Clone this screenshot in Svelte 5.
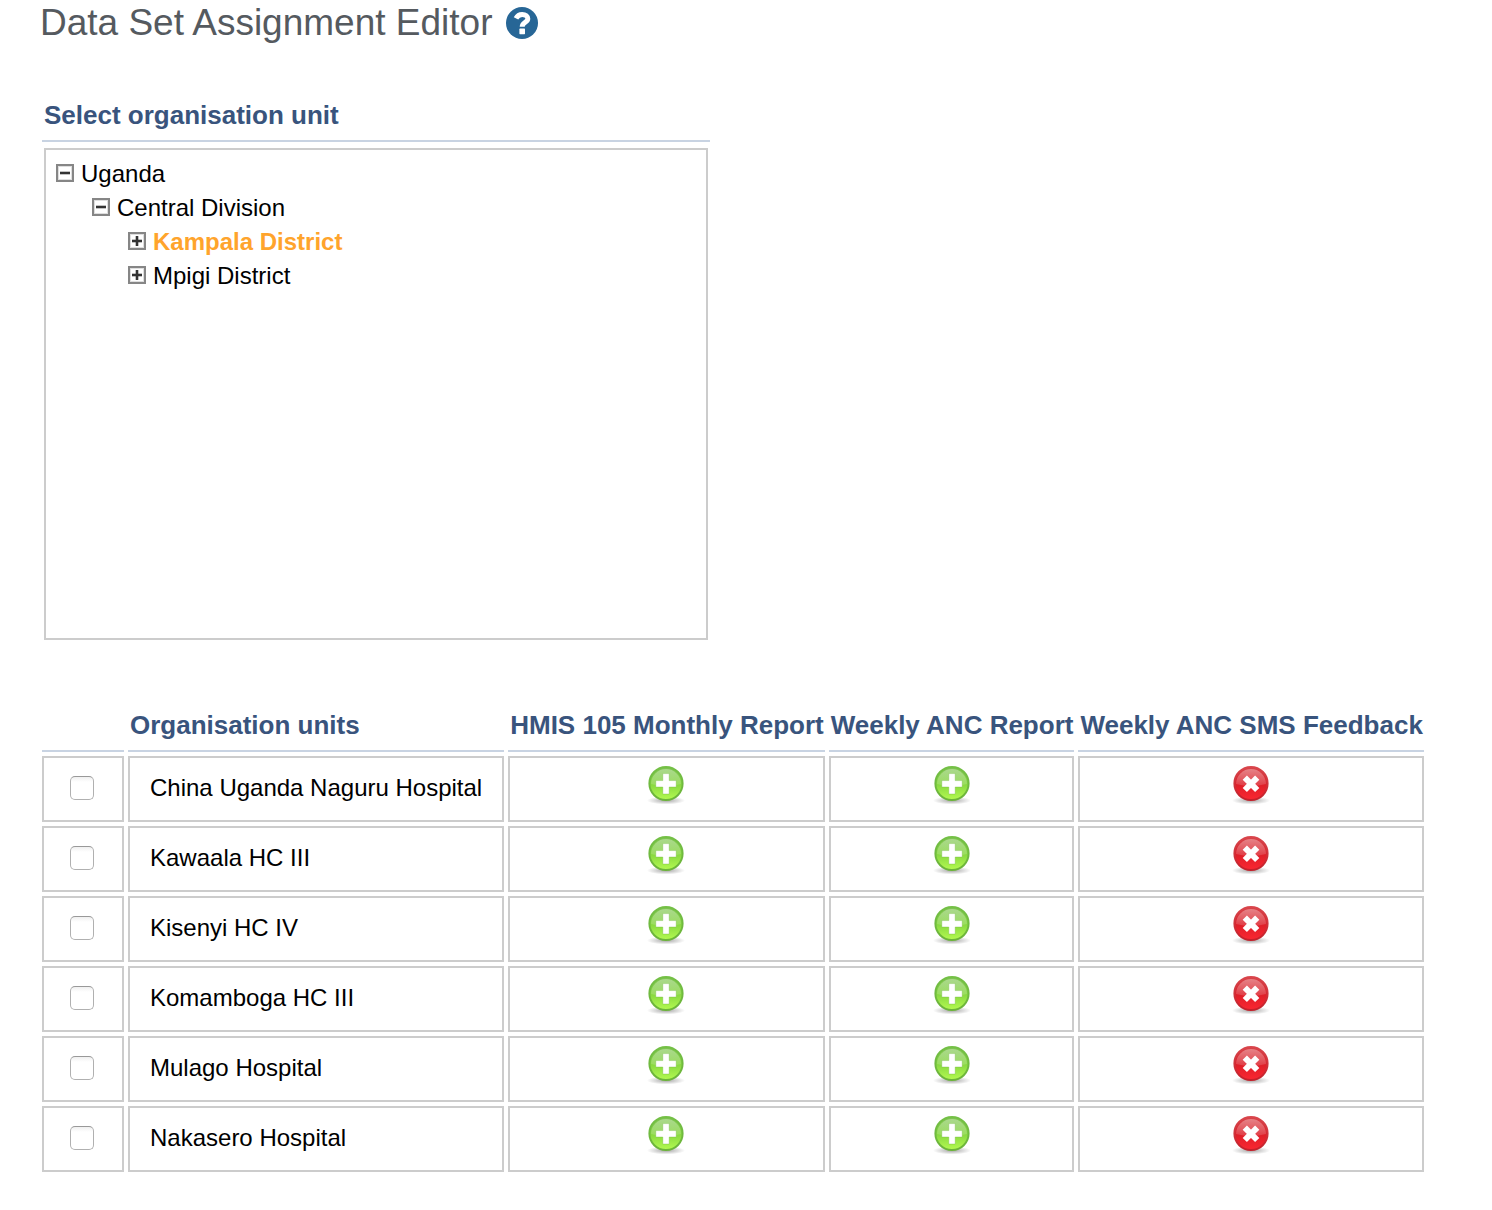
<script lang="ts">
  interface TreeNode {
    name: string;
    open?: boolean;
    children?: TreeNode[];
  }

  interface OrgUnit {
    name: string;
    assigned: boolean[];
  }

  const dataSets = ['HMIS 105 Monthly Report', 'Weekly ANC Report', 'Weekly ANC SMS Feedback'];

  let tree: TreeNode[] = $state([
    {
      name: 'Uganda',
      open: true,
      children: [
        {
          name: 'Central Division',
          open: true,
          children: [{ name: 'Kampala District' }, { name: 'Mpigi District' }]
        }
      ]
    }
  ]);

  let units: OrgUnit[] = $state(
    [
      'China Uganda Naguru Hospital',
      'Kawaala HC III',
      'Kisenyi HC IV',
      'Komamboga HC III',
      'Mulago Hospital',
      'Nakasero Hospital'
    ].map(name => ({ name, assigned: [true, true, false] }))
  );

  let selected = $state('Kampala District');
</script>

{#snippet branch(nodes: TreeNode[])}
  <ul>
    {#each nodes as node (node.name)}
      <li>
        <div class="node">
          <button
            class="toggle"
            aria-label={(node.open ? 'Collapse ' : 'Expand ') + node.name}
            onclick={() => (node.open = !node.open)}
          >
            <svg width="18" height="18" viewBox="0 0 18 18">
              <rect x="1" y="1" width="16" height="16" fill="#fff" stroke="#868686" stroke-width="2" />
              <rect x="2.5" y="2.5" width="13" height="13" fill="none" stroke="#dedede" />
              <path d="M4 9H14" stroke="#333" stroke-width="2.6" />
              {#if !node.open}
                <path d="M9 4V14" stroke="#333" stroke-width="2.6" />
              {/if}
            </svg>
          </button>
          <a
            href="#{node.name.toLowerCase().replace(' ', '-')}"
            class:selected={selected === node.name}
            onclick={() => (selected = node.name)}>{node.name}</a>
        </div>
        {#if node.open && node.children}
          {@render branch(node.children)}
        {/if}
      </li>
    {/each}
  </ul>
{/snippet}

<svg class="defs" width="0" height="0" aria-hidden="true">
  <defs>
    <linearGradient id="green" x1="0" y1="0" x2="0" y2="1">
      <stop offset="0" stop-color="#7cc152" />
      <stop offset="0.5" stop-color="#86d640" />
      <stop offset="1" stop-color="#b4fb50" />
    </linearGradient>
    <linearGradient id="green-rim" x1="0" y1="0" x2="0" y2="1">
      <stop offset="0" stop-color="#74c046" />
      <stop offset="1" stop-color="#6cb43a" />
    </linearGradient>
    <linearGradient id="red" x1="0" y1="0" x2="0" y2="1">
      <stop offset="0" stop-color="#d8444a" />
      <stop offset="0.5" stop-color="#dc1e28" />
      <stop offset="1" stop-color="#fb2631" />
    </linearGradient>
    <linearGradient id="red-rim" x1="0" y1="0" x2="0" y2="1">
      <stop offset="0" stop-color="#d9464c" />
      <stop offset="1" stop-color="#c4202a" />
    </linearGradient>
    <linearGradient id="gloss" x1="0" y1="0" x2="0" y2="1">
      <stop offset="0" stop-color="#fff" stop-opacity="0.35" />
      <stop offset="1" stop-color="#fff" stop-opacity="0.15" />
    </linearGradient>
    <radialGradient id="shadow">
      <stop offset="0" stop-color="#000" stop-opacity="0.35" />
      <stop offset="1" stop-color="#000" stop-opacity="0" />
    </radialGradient>
  </defs>
</svg>

<main>
  <h1>
    Data Set Assignment Editor
    <a class="help" href="#help" aria-label="Help">
      <svg width="32" height="32" viewBox="0 0 32 32">
        <circle cx="16" cy="16" r="16" fill="#276696" />
        <path
          d="M10 11.4C11.4 8.6 13.3 7.4 16.2 7.4C19.6 7.4 21.8 9.3 21.8 11.8C21.8 15.4 16.2 15.2 16.2 19.8"
          fill="none"
          stroke="#fff"
          stroke-width="5"
        />
        <rect x="13.4" y="21.6" width="5.6" height="5.6" rx="0.6" fill="#fff" />
      </svg>
    </a>
  </h1>

  <section class="picker">
    <h2>Select organisation unit</h2>
    <div class="tree">
      {@render branch(tree)}
    </div>
  </section>

  <table>
    <thead>
      <tr>
        <th aria-label="Select"></th>
        <th>Organisation units</th>
        {#each dataSets as dataSet}
          <th>{dataSet}</th>
        {/each}
      </tr>
    </thead>
    <tbody>
      {#each units as unit (unit.name)}
        <tr>
          <td><input type="checkbox" aria-label={unit.name} /></td>
          <td>{unit.name}</td>
          {#each unit.assigned as on, i}
            <td class="status">
              <button
                aria-label={(on ? 'Unassign ' : 'Assign ') + dataSets[i]}
                onclick={() => (unit.assigned[i] = !on)}
              >
                <svg width="40" height="48" viewBox="0 0 40 48">
                  <ellipse cx="20" cy="36.5" rx="19" ry="4" fill="url(#shadow)" />
                  {#if on}
                    <circle cx="20" cy="19.5" r="16.6" fill="url(#green)" stroke="url(#green-rim)" stroke-width="2" />
                    <path d="M5 20A15 15 0 0 1 35 20Q20 24 5 20Z" fill="url(#gloss)" />
                    <path
                      d="M16.8 9.6H23.2V16.6H30.2V23H23.2V30H16.8V23H9.8V16.6H16.8Z"
                      fill="#fff"
                      stroke="#6db53a"
                      stroke-opacity="0.35"
                    />
                  {:else}
                    <circle cx="20" cy="19.5" r="16.6" fill="url(#red)" stroke="url(#red-rim)" stroke-width="2" />
                    <path d="M5 20A15 15 0 0 1 35 20Q20 24 5 20Z" fill="url(#gloss)" />
                    <path d="M13.8 13.6L26.2 26M26.2 13.6L13.8 26" stroke="#fff" stroke-width="6" />
                  {/if}
                </svg>
              </button>
            </td>
          {/each}
        </tr>
      {/each}
    </tbody>
  </table>
</main>

<style>
  :global(body) {
    background: #fff;
  }

  .defs {
    position: absolute;
  }

  main {
    padding: 0 38px 34px;
    font-family: 'Liberation Sans', Arial, sans-serif;
    font-size: 24px;
    color: #000;
  }

  h1 {
    display: flex;
    align-items: center;
    gap: 14px;
    margin: 0 0 52px;
    padding-left: 2px;
    font-size: 37px;
    line-height: 46px;
    font-weight: 400;
    color: #555a5f;
  }

  .help,
  .help svg {
    display: block;
  }

  .picker {
    width: 668px;
    max-width: 100%;
    margin: 0 4px 66px;
  }

  h2,
  th {
    font-size: 26px;
    line-height: 30px;
    font-weight: 700;
    color: #39547d;
    text-align: left;
    border-bottom: 2px solid #c8d3e2;
  }

  h2 {
    margin: 0 0 6px;
    padding: 2px 2px 10px;
  }

  .tree {
    box-sizing: border-box;
    min-height: 492px;
    margin: 0 2px;
    padding: 6px 10px;
    border: 2px solid #ccc;
  }

  ul {
    margin: 0;
    padding: 0;
    list-style: none;
  }

  ul ul {
    padding-left: 36px;
  }

  .node {
    display: flex;
    align-items: center;
    gap: 7px;
    line-height: 32px;
  }

  .node a {
    padding-top: 2px;
    color: #000;
    text-decoration: none;
  }

  .node a.selected {
    font-weight: 700;
    color: #ffa42c;
  }

  button {
    display: block;
    padding: 0;
    border: 0;
    background: none;
    cursor: pointer;
  }

  button svg {
    display: block;
  }

  table {
    border-collapse: separate;
    border-spacing: 4px;
    white-space: nowrap;
  }

  th {
    padding: 0 1px 10px 2px;
  }

  td {
    height: 60px;
    padding: 0 20px 2px;
    border: 2px solid #ccc;
  }

  .status button {
    margin: 0 auto;
  }

  input {
    appearance: none;
    display: block;
    box-sizing: border-box;
    width: 24px;
    height: 24px;
    margin: 0 8px 0 6px;
    border: 1px solid #b0b0b0;
    border-top-color: #999;
    border-radius: 5px;
    background: linear-gradient(#f0f0f0, #fff 5px);
  }

  input:checked {
    background: #39547d;
  }
</style>
